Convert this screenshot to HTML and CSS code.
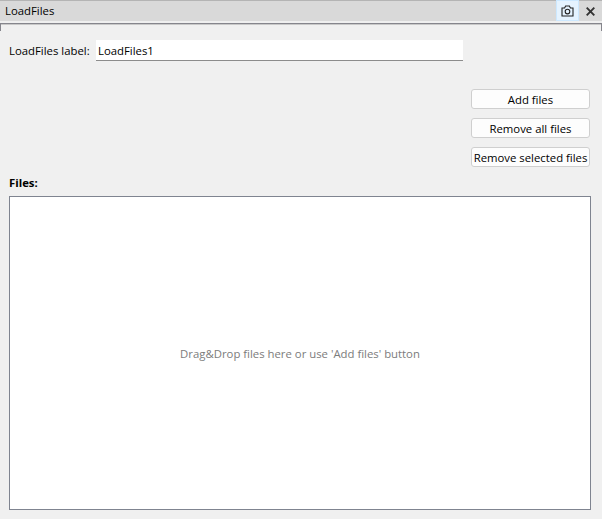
FILE: index.html
```html
<!DOCTYPE html>
<html lang="en">
<head>
<meta charset="utf-8">
<title>LoadFiles</title>
<link rel="stylesheet" href="styles.css">
</head>
<body>
<header class="titlebar">
  <span class="title">LoadFiles</span>
  <span class="tool tool-active">
    <svg width="13" height="12" viewBox="0 0 13 12" fill="none" stroke="#222" stroke-width="1.1"><path d="M1 3h2.600l1-2h3.800l1 2H12v8H1z"/><circle cx="6.500" cy="6.600" r="2.300"/></svg>
  </span>
  <span class="tool">
    <svg width="9" height="9" viewBox="0 0 9 9" stroke="#333" stroke-width="1.9"><path d="M.7.7l7.6 7.6M8.300.7L.7 8.300"/></svg>
  </span>
</header>
<div class="tabline"></div>
<main class="content">
  <div class="label-row">
    <label class="field-label" for="name">LoadFiles label:</label>
    <input class="field-input" id="name" value="LoadFiles1">
  </div>
  <div class="actions">
    <button class="btn">Add files</button>
    <button class="btn">Remove all files</button>
    <button class="btn">Remove selected files</button>
  </div>
  <div class="files-label">Files:</div>
  <div class="dropzone">Drag&amp;Drop files here or use 'Add files' button</div>
</main>
</body>
</html>
```
FILE: styles.css
```css
* { box-sizing: border-box; }
html, body { height: 100%; }
body {
  margin: 0;
  background: #f0f0f0;
  font-family: "Open Sans", "Noto Sans", sans-serif;
  font-size: 11.35px;
  color: #000;
  display: flex;
  flex-direction: column;
  overflow: hidden;
}
.titlebar {
  height: 23px;
  flex: none;
  display: flex;
  align-items: stretch;
  background: #d9d9d9;
  border-top: 1px solid #b4b4b4;
  border-bottom: 2px solid #efefef;
}
.title { flex: 1; padding-left: 5px; line-height: 20px; }
.tool {
  width: 22px;
  margin-right: 1px;
  display: flex;
  align-items: center;
  justify-content: center;
}
.tool-active {
  background: #e5f3ff;
  border: 1px solid #cce8ff;
  width: 23px;
  margin-top: -1px;
  margin-right: 0;
}
.tabline {
  flex: none;
  height: 8px;
  border-top: 1px solid #85858c;
  border-left: 1px solid #85858c;
  border-right: 1px solid #85858c;
  box-shadow: inset 0 1px 0 #c8c8c8;
}
.content {
  flex: 1;
  display: flex;
  flex-direction: column;
  padding: 9px 11px 9px 9px;
  min-height: 0;
}
.label-row { display: flex; align-items: center; height: 21px; }
.field-label { width: 87px; flex: none; }
.field-input {
  width: 367px;
  height: 21px;
  border: 0;
  border-bottom: 1px solid #8c8c8c;
  background: #fff;
  padding: 0 2px;
  font: inherit;
  color: #000;
  outline: none;
}
.actions {
  display: flex;
  flex-direction: column;
  align-items: flex-end;
  gap: 9px;
  margin-top: 28px;
  margin-right: 1px;
}
.btn {
  width: 119px;
  height: 20px;
  padding: 0;
  background: #fdfdfd;
  border: 1px solid #cfcfcf;
  border-radius: 3px;
  font: inherit;
  color: #000;
  white-space: nowrap;
}
.files-label { font-weight: 700; margin-top: 8px; height: 21px; line-height: 16px; }
.dropzone {
  flex: 1;
  display: flex;
  align-items: center;
  justify-content: center;
  background: #fff;
  border: 1px solid #7f8490;
  color: #7c7c7c;
}
```
